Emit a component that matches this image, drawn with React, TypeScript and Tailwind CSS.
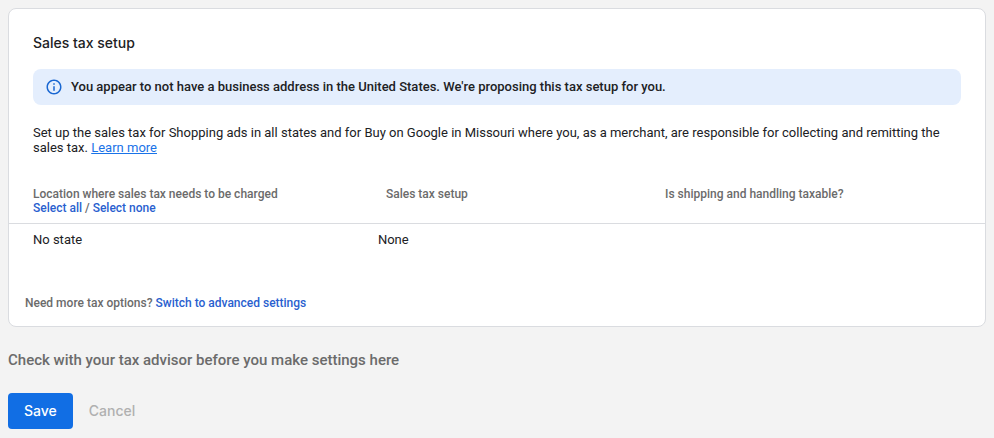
import { ReactNode } from "react";

const LinkButton = ({ children }: { children: ReactNode }) => (
  <button type="button" className="cursor-pointer font-medium text-[#2a5fcf]">
    {children}
  </button>
);

const InfoIcon = () => (
  <svg viewBox="0 0 24 24" className="size-[18px] shrink-0 fill-[#1967d2]" aria-hidden="true">
    <path d="M11 7h2v2h-2zm0 4h2v6h-2zm1-9C6.48 2 2 6.48 2 12s4.48 10 10 10 10-4.48 10-10S17.52 2 12 2zm0 18c-4.41 0-8-3.59-8-8s3.59-8 8-8 8 3.59 8 8-3.59 8-8 8z" />
  </svg>
);

const TaxTable = () => (
  <table className="mt-8 w-full table-fixed text-left">
    <colgroup>
      <col className="w-[37.8%]" />
      <col className="w-[28.6%]" />
      <col />
    </colgroup>
    <thead className="border-b border-[#dadce0] align-top text-xs leading-[14px] text-[#6b6b6b]">
      <tr>
        <th className="pb-2 pl-6 font-medium">
          Location where sales tax needs to be charged
          <br />
          <LinkButton>Select all</LinkButton> / <LinkButton>Select none</LinkButton>
        </th>
        <th className="pl-2 font-medium">Sales tax setup</th>
        <th className="pl-2 font-medium">Is shipping and handling taxable?</th>
      </tr>
    </thead>
    <tbody className="text-[13px] leading-4">
      <tr>
        <td className="py-2 pl-6">No state</td>
        <td className="py-2">None</td>
        <td></td>
      </tr>
    </tbody>
  </table>
);

const App = () => {
  return (
    <main className="min-h-screen bg-[#f3f3f3] p-2 font-[Roboto,sans-serif] text-[#202124]">
      <section className="rounded-lg border border-[#dadce0] bg-white pt-6 pb-4">
        <div className="px-6">
          <h1 className="font-[Inter,sans-serif] text-sm font-medium">Sales tax setup</h1>
          <div className="mt-4 flex h-9 items-center gap-2 rounded-lg bg-[#e4eefd] px-3">
            <InfoIcon />
            <p className="text-[13px] font-medium">
              You appear to not have a business address in the United States. We're proposing this tax setup for you.
            </p>
          </div>
          <p className="mt-5 text-[13px] leading-[15px]">
            Set up the sales tax for Shopping ads in all states and for Buy on Google in Missouri where you, as a
            merchant, are responsible for collecting and remitting the sales tax.{" "}
            <a href="#" className="inline-block text-[#1a73e8] underline">
              Learn more
            </a>
          </p>
        </div>

        <TaxTable />

        <p className="mt-10 px-4 text-xs leading-[14px] font-medium text-[#6b6b6b]">
          Need more tax options? <LinkButton>Switch to advanced settings</LinkButton>
        </p>
      </section>

      <p className="mt-6 text-[15px] leading-[18px] font-medium text-[#6b6b6b]">
        Check with your tax advisor before you make settings here
      </p>

      <div className="mt-6 flex font-[Inter,sans-serif] text-sm font-medium">
        <button type="button" className="h-9 cursor-pointer rounded-sm bg-[#116ee4] px-4 text-white">
          Save
        </button>
        <button type="button" className="h-9 cursor-pointer px-4 text-[#b0b0b0]">
          Cancel
        </button>
      </div>
    </main>
  );
};

export default App;
